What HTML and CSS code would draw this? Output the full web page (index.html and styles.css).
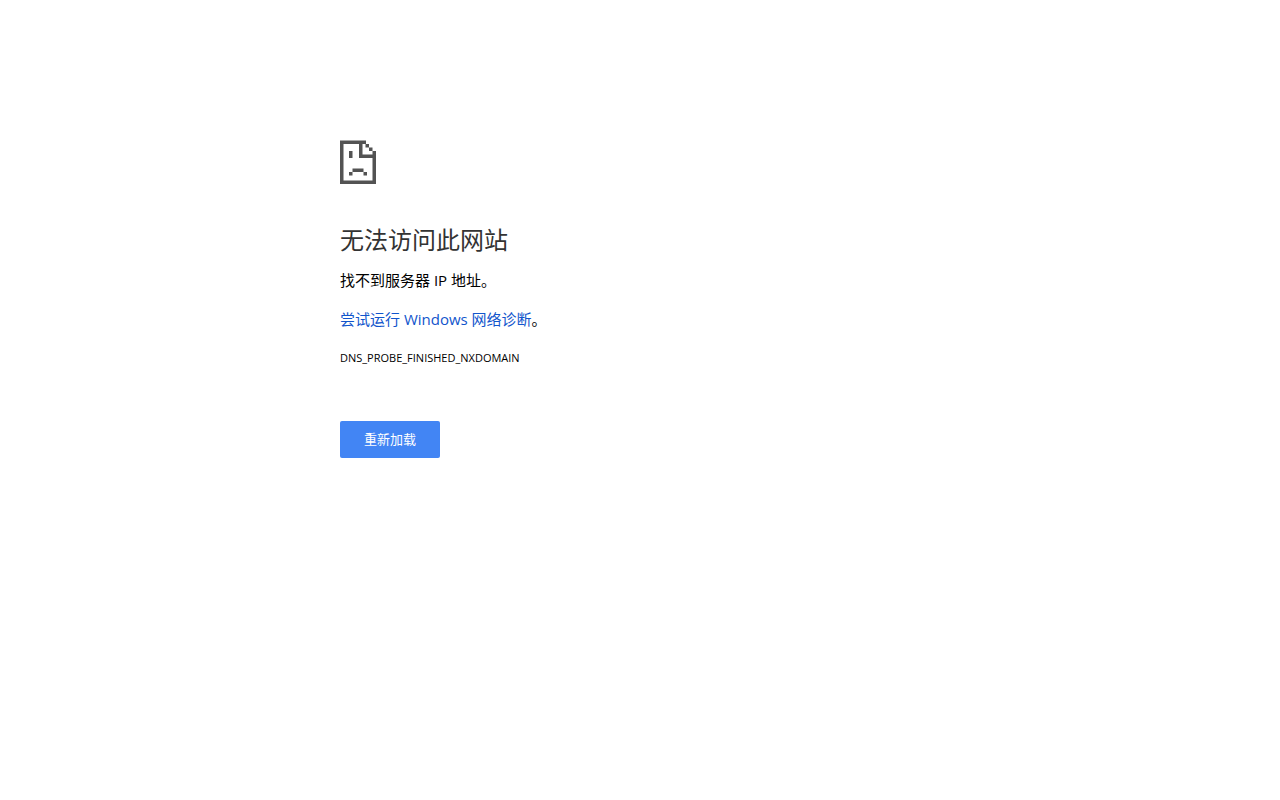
FILE: index.html
```html
<!DOCTYPE html>
<html lang="zh-CN">
<head>
  <meta charset="UTF-8">
  <meta name="viewport" content="width=device-width, initial-scale=1.0">
  <title>无法访问此网站</title>
  <link rel="stylesheet" href="styles.css">
</head>
<body>
  <main class="error-page">
    <svg class="error-icon" width="36" height="44" viewBox="0 0 36 44" aria-hidden="true">
      <!-- page outline -->
      <path d="M0 .5H26V4H22.500V14.500H32.500V11H36V44H0ZM3.500 4V40.500H32.500V18H19V4Z" fill-rule="evenodd"/>
      <!-- folded corner -->
      <path d="M25.500 4H29V7.500H25.500ZM29 7.500H32.500V11H29Z"/>
      <!-- face -->
      <path d="M9 11H12.500V18H9ZM12.500 28.500H23.500V32H12.500ZM9 32H12.500V35.500H9ZM23.500 32H27V35.500H23.500Z"/>
    </svg>
    <h1 class="error-title">无法访问此网站</h1>
    <p class="error-summary">找不到服务器 IP 地址。</p>
    <p class="error-suggestion"><a href="#">尝试运行 Windows 网络诊断</a>。</p>
    <div class="error-code">DNS_PROBE_FINISHED_NXDOMAIN</div>
    <button type="button" class="reload-btn">重新加载</button>
  </main>

  <script>
    document.querySelector('.reload-btn').addEventListener('click', () => {
      window.location.reload();
    });
  </script>
</body>
</html>
```

FILE: styles.css
```css
* {
  box-sizing: border-box;
  margin: 0;
  padding: 0;
}

body {
  font-family: "Open Sans", "Noto Sans CJK SC", sans-serif;
  font-size: 15px;
  line-height: 24px;
  color: #000;
  background-color: #fff;
}

.error-page {
  max-width: 600px;
  margin: 0 auto;
  padding-top: 140px;
}

/* Sad page icon */
.error-icon {
  display: block;
  margin-bottom: 42px;
  fill: #535353;
}

/* Message */
.error-title {
  margin-bottom: 14px;
  font-size: 24px;
  font-weight: 400;
  line-height: 28px;
  color: #333;
}

.error-summary,
.error-suggestion {
  margin-bottom: 15px;
}

.error-suggestion a {
  color: #1155cc;
  text-decoration: none;
}

.error-code {
  font-size: 11px;
  line-height: 24px;
}

/* Reload button */
.reload-btn {
  display: block;
  margin-top: 51px;
  padding: 8px 24px;
  font-family: inherit;
  font-size: 13px;
  line-height: 21px;
  color: #fff;
  background-color: #4285f4;
  border: none;
  border-radius: 2px;
  cursor: pointer;
}

.reload-btn:hover {
  background-color: #3367d6;
}
```
